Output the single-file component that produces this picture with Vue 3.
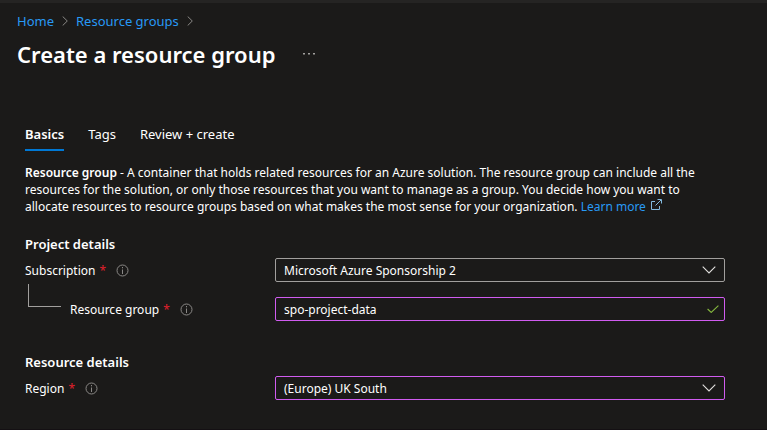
<script setup>
import { ref } from 'vue'

const tabs = ['Basics', 'Tags', 'Review + create']
const activeTab = ref('Basics')
const subscription = ref('Microsoft Azure Sponsorship 2')
const groupName = ref('spo-project-data')
const region = ref('(Europe) UK South')
</script>

<template>
  <div class="page">
    <header class="header">
      <nav class="breadcrumb" aria-label="Breadcrumb">
        <a href="#">Home</a>
        <svg class="crumb-arrow" viewBox="0 0 6 10"><path d="M0.7 0.5 5.3 5 0.7 9.5" /></svg>
        <a href="#">Resource groups</a>
        <svg class="crumb-arrow" viewBox="0 0 6 10"><path d="M0.7 0.5 5.3 5 0.7 9.5" /></svg>
      </nav>
      <div class="title-row">
        <h1>Create a resource group</h1>
        <button class="more" type="button" aria-label="More actions">
          <svg viewBox="0 0 12 2"><path d="M0 0h2v1.5H0zM5 0h2v1.5H5zM10 0h2v1.5h-2z" /></svg>
        </button>
      </div>
    </header>

    <main class="content">
      <div class="tabs" role="tablist">
        <button
          v-for="tab in tabs"
          :key="tab"
          type="button"
          role="tab"
          class="tab"
          :class="{ active: tab === activeTab }"
          :aria-selected="tab === activeTab"
          @click="activeTab = tab"
        >{{ tab }}</button>
      </div>

      <p class="intro">
        <strong>Resource group</strong> - A container that holds related resources for an Azure solution. The resource group can include all the resources for the solution, or only those resources that you want to manage as a group. You decide how you want to allocate resources to resource groups based on what makes the most sense for your organization.
        <a href="#">Learn more<svg class="external" viewBox="0 0 12 12"><path d="M5 2.5H1.5v8h8V7M5.5 6.5 11 1M7.5 0.5h4v4" /></svg></a>
      </p>

      <section class="section">
        <h2>Project details</h2>
        <div class="field">
          <div class="label">
            <label for="subscription">Subscription</label><span class="required">*</span>
            <svg class="info" viewBox="0 0 13 13"><circle cx="6.5" cy="6.5" r="5.5" /><path d="M6.5 5.5V10M6.5 3v1.3" /></svg>
          </div>
          <div class="control">
            <select id="subscription" v-model="subscription">
              <option>Microsoft Azure Sponsorship 2</option>
            </select>
            <svg class="chevron" viewBox="0 0 14 8"><path d="M0.7 0.7 7 7 13.3 0.7" /></svg>
          </div>
        </div>
        <div class="field nested">
          <div class="label">
            <span class="branch"></span>
            <label for="group-name">Resource group</label><span class="required">*</span>
            <svg class="info" viewBox="0 0 13 13"><circle cx="6.5" cy="6.5" r="5.5" /><path d="M6.5 5.5V10M6.5 3v1.3" /></svg>
          </div>
          <div class="control edited">
            <input id="group-name" v-model="groupName" type="text" spellcheck="false" />
            <svg class="check" viewBox="0 0 12 8"><path d="M0.6 4 4.2 7.4 11.4 0.6" /></svg>
          </div>
        </div>
      </section>

      <section class="section">
        <h2>Resource details</h2>
        <div class="field">
          <div class="label">
            <label for="region">Region</label><span class="required">*</span>
            <svg class="info" viewBox="0 0 13 13"><circle cx="6.5" cy="6.5" r="5.5" /><path d="M6.5 5.5V10M6.5 3v1.3" /></svg>
          </div>
          <div class="control edited">
            <select id="region" v-model="region">
              <option>(Europe) UK South</option>
            </select>
            <svg class="chevron" viewBox="0 0 14 8"><path d="M0.7 0.7 7 7 13.3 0.7" /></svg>
          </div>
        </div>
      </section>
    </main>
  </div>
</template>

<style>
body {
  margin: 0;
  background: #1b1a19;
}
</style>

<style scoped>
.page {
  box-sizing: border-box;
  min-height: 100vh;
  border-top: 3px solid #252423;
  border-bottom: 1px solid #141013;
  background: #1b1a19;
  color: #fff;
  font: 12px/17px "Segoe UI", "Noto Sans", "Open Sans", sans-serif;
}
svg {
  fill: none;
  flex: none;
}
a {
  color: #2899f5;
  text-decoration: none;
}
button {
  padding: 0;
  border: 0;
  background: none;
  color: inherit;
  font: inherit;
}
.header {
  padding: 9px 17px 0;
}
.breadcrumb {
  display: flex;
  align-items: center;
  gap: 8px;
  font-size: 13px;
  line-height: 18px;
}
.crumb-arrow {
  width: 6px;
  height: 10px;
  stroke: #8a8886;
}
.title-row {
  display: flex;
  align-items: center;
  gap: 28px;
  margin-top: 8px;
}
h1 {
  margin: 0;
  font-size: 22px;
  line-height: 32px;
  font-weight: 600;
}
.more {
  display: flex;
}
.more svg {
  width: 12px;
  height: 2px;
  fill: #a19f9d;
}
.content {
  padding: 56px 42px 26px 25px;
}
.tabs {
  display: flex;
  gap: 24px;
  font-size: 13px;
}
.tab {
  padding-bottom: 6px;
  border-bottom: 2px solid transparent;
}
.tab.active {
  border-color: #0078d4;
  font-weight: 600;
}
.intro {
  margin: 13px 0 0;
}
.intro strong {
  font-weight: 600;
}
.external {
  width: 12px;
  height: 12px;
  margin-left: 4px;
  stroke: #83b9dd;
}
.section {
  margin-top: 21px;
}
.section + .section {
  margin-top: 33px;
}
h2 {
  margin: 0 0 5px;
  font-size: 13px;
  line-height: 17px;
  font-weight: 600;
}
.field {
  display: grid;
  grid-template-columns: 250px minmax(0, 1fr);
  align-items: center;
}
.nested {
  margin-top: 15px;
}
.label {
  display: flex;
  align-items: center;
}
.branch {
  box-sizing: border-box;
  width: 33px;
  height: 23px;
  margin: -23px 9px 4px 3px;
  border: solid #a19f9d;
  border-width: 0 0 1px 1px;
}
.required {
  margin-left: 4px;
  color: #e0202c;
}
.info {
  width: 13px;
  height: 13px;
  margin-left: 10px;
  stroke: #8a8886;
}
.control {
  display: flex;
  align-items: center;
  box-sizing: border-box;
  height: 24px;
  border: 1px solid #a19f9d;
  border-radius: 2px;
  position: relative;
}
.control.edited {
  border-color: #d05cf0;
}
select,
input {
  appearance: none;
  box-sizing: border-box;
  width: 100%;
  height: 22px;
  padding: 0 32px 0 8px;
  border: 0;
  outline: 0;
  background: transparent;
  color: #fff;
  font: inherit;
}
.chevron,
.check {
  position: absolute;
  pointer-events: none;
  stroke-width: 1.1;
}
.chevron {
  right: 8px;
  width: 14px;
  height: 8px;
  stroke: #e1dfdd;
}
.check {
  right: 5px;
  width: 12px;
  height: 8px;
  stroke: #86b93f;
}
</style>
